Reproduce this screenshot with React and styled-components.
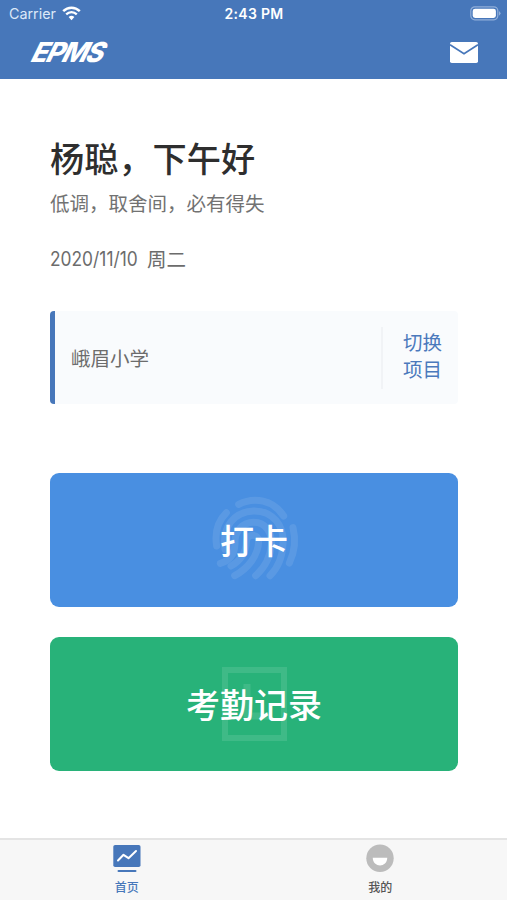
import styled, { createGlobalStyle } from "styled-components";

const GlobalStyle = createGlobalStyle`
  * {
    box-sizing: border-box;
  }
  body {
    margin: 0;
    background: #fff;
    font-family: "Noto Sans CJK SC", sans-serif;
  }
  button {
    border: 0;
    padding: 0;
    background: none;
    font: inherit;
  }
`;

const Screen = styled.div`
  display: flex;
  flex-direction: column;
  width: 507px;
  height: 900px;
  overflow: hidden;
`;

const Header = styled.header`
  height: 79px;
  flex: none;
  background: #4777ba;
  color: #fff;
`;

const StatusBar = styled.div`
  display: grid;
  grid-template-columns: 1fr auto 1fr;
  align-items: center;
  height: 27px;
  padding: 0 6px 0 7px;
  font-family: Inter, sans-serif;
  font-size: 14px;
  line-height: 27px;
`;

const Carrier = styled.div`
  display: flex;
  align-items: center;
  gap: 6px;
  padding-left: 2px;
  color: #dce8f8;
  font-size: 14.3px;
`;

const Time = styled.div`
  font-size: 14px;
  font-weight: 600;
  letter-spacing: 0.3px;
`;

const BatteryIcon = styled.svg`
  justify-self: end;
`;

const TitleBar = styled.div`
  display: flex;
  align-items: center;
  justify-content: space-between;
  height: 50px;
  padding: 0 29px 0 34px;
`;

const Logo = styled.div`
  font-family: Inter, sans-serif;
  font-size: 27.5px;
  font-weight: 800;
  line-height: 50px;
  letter-spacing: -1.5px;
  transform: skewX(-26deg) scaleX(0.97);
  transform-origin: left center;
`;

const Main = styled.main`
  flex: 1;
  padding: 53px 49px 0 50px;
`;

const Greeting = styled.h1`
  margin: 0;
  color: #2e2e2e;
  font-size: 34.2px;
  font-weight: 500;
  line-height: 50px;
`;

const Motto = styled.p`
  margin: 7px 0 0;
  color: #727272;
  font-size: 19.5px;
  line-height: 28px;
`;

const DateLine = styled.div`
  display: flex;
  margin-top: 28px;
  color: #6c6c6c;
  font-size: 19.5px;
  line-height: 28px;
`;

const DateDigits = styled.span`
  width: 97px;
  font-family: Inter, sans-serif;
  transform: scaleX(0.89);
  transform-origin: left center;
`;

const ProjectCard = styled.section`
  display: flex;
  align-items: center;
  height: 93px;
  margin-top: 38px;
  padding-left: 16px;
  border-left: 5px solid #4777ba;
  border-radius: 4px;
  background: #f9fbfd;
`;

const ProjectName = styled.div`
  flex: 1;
  color: #6c6c6c;
  font-size: 19.5px;
`;

const SwitchButton = styled.button`
  width: 77px;
  height: 62px;
  padding: 0 0 5px 20px;
  border-left: 2px solid #f1f3f6;
  color: #4b79bc;
  font-size: 19.5px;
  line-height: 27px;
  text-align: left;
`;

const ActionButton = styled.button`
  display: grid;
  place-items: center;
  width: 100%;
  height: 134px;
  margin-top: ${(props) => props.$gap}px;
  border-radius: 9px;
  background: ${(props) => props.$color};
  color: #fff;

  > * {
    grid-area: 1 / 1;
  }
`;

const ActionLabel = styled.span`
  z-index: 1;
  font-size: 34px;
  font-weight: 500;
  line-height: 50px;
`;

const TabBar = styled.nav`
  display: grid;
  grid-template-columns: 1fr 1fr;
  height: 62px;
  flex: none;
  border-top: 2px solid #e4e4e4;
  background: #f7f7f7;
`;

const Tab = styled.div`
  display: flex;
  flex-direction: column;
  align-items: center;
  padding-top: 4px;
  color: ${(props) => (props.$active ? "#4777ba" : "#555")};
  font-size: 12px;
  font-weight: 500;
  line-height: 18px;

  svg {
    margin-bottom: 5px;
  }
`;

function WifiIcon() {
  return (
    <svg width="19" height="15" viewBox="0 0 19 15" fill="none" stroke="#fff">
      <path d="M1.2 5.2 C6 .5 13 .5 17.8 5.2" strokeWidth="2.5" />
      <path d="M4.2 8.4 C7.3 5.4 11.7 5.4 14.8 8.4" strokeWidth="2.3" />
      <path d="M6.6 11 Q9.5 8.4 12.4 11 L9.5 14.2Z" fill="#fff" stroke="none" />
    </svg>
  );
}

function Battery() {
  return (
    <BatteryIcon width="31" height="15" viewBox="0 0 31 15">
      <rect x=".8" y=".8" width="27" height="13" rx="4" fill="none" stroke="#91afd9" strokeWidth="1.2" />
      <rect x="2.7" y="2.7" width="23.2" height="9.2" rx="2.4" fill="#fff" />
      <path d="M29 5 Q32 7.3 29 9.7Z" fill="#91afd9" />
    </BatteryIcon>
  );
}

function MailIcon() {
  return (
    <svg width="28" height="21" viewBox="0 0 28 21">
      <rect width="28" height="21" rx="1.8" fill="#fff" />
      <path d="M0 2.7 L14 11.8 L28 2.7" fill="none" stroke="#4777ba" strokeWidth="1.7" />
    </svg>
  );
}

function FingerprintIcon() {
  return (
    <svg width="96" height="96" viewBox="0 0 288 288" fill="none">
      <g opacity=".09" stroke="#fff" strokeWidth="21" strokeLinecap="round">
        <path d="M98 37 C145 13 202 24 233 72" />
        <path d="M61 62 C35 88 26 125 32 162" />
        <path d="M261 107 C270 143 266 180 250 213" />
        <path d="M57 172 C48 102 84 60 143 57 C201 56 235 102 231 155 C229 196 213 231 192 251" />
        <path d="M43 214 C72 206 86 187 87 155 C85 115 112 91 143 91 C178 91 199 121 196 158 C193 197 174 228 149 251" />
        <path d="M86 251 C126 229 157 191 158 147 C157 124 123 124 121 149 C121 179 104 207 75 222" />
      </g>
    </svg>
  );
}

function RecordIcon() {
  return (
    <svg width="65" height="74" viewBox="0 0 65 74" fill="none" stroke="#fff" strokeOpacity=".11">
      <rect x="3" y="3" width="59" height="68" strokeWidth="6" />
      <path d="M25 17 V49 H48" strokeWidth="7" />
    </svg>
  );
}

function HomeIcon() {
  return (
    <svg width="28" height="29" viewBox="0 0 28 29">
      <rect x=".3" y="1" width="27.2" height="22" rx="1.8" fill="#4777ba" />
      <path
        d="M5 16.5 L10.5 10.8 L15.5 14.2 L23 7"
        fill="none"
        stroke="#fff"
        strokeWidth="2"
        strokeLinecap="round"
        strokeLinejoin="round"
      />
      <path d="M5.5 27 H22.5" stroke="#4777ba" strokeWidth="2" strokeLinecap="round" />
    </svg>
  );
}

function ProfileIcon() {
  return (
    <svg width="28" height="29" viewBox="0 0 28 29">
      <circle cx="14" cy="14.3" r="13.7" fill="#bcbcbc" />
      <path d="M6.7 13.8 H21.3 C21 24 7 24 6.7 13.8Z" fill="#fff" />
    </svg>
  );
}

function App() {
  return (
    <Screen>
      <GlobalStyle />
      <Header>
        <StatusBar>
          <Carrier>
            Carrier
            <WifiIcon />
          </Carrier>
          <Time>2:43 PM</Time>
          <Battery />
        </StatusBar>
        <TitleBar>
          <Logo>EPMS</Logo>
          <MailIcon />
        </TitleBar>
      </Header>
      <Main>
        <Greeting>杨聪，下午好</Greeting>
        <Motto>低调，取舍间，必有得失</Motto>
        <DateLine>
          <DateDigits>2020/11/10</DateDigits>
          <span>周二</span>
        </DateLine>
        <ProjectCard>
          <ProjectName>峨眉小学</ProjectName>
          <SwitchButton>
            切换
            <br />
            项目
          </SwitchButton>
        </ProjectCard>
        <ActionButton $color="#498fe1" $gap={69}>
          <FingerprintIcon />
          <ActionLabel>打卡</ActionLabel>
        </ActionButton>
        <ActionButton $color="#28b279" $gap={30}>
          <RecordIcon />
          <ActionLabel>考勤记录</ActionLabel>
        </ActionButton>
      </Main>
      <TabBar>
        <Tab $active>
          <HomeIcon />
          首页
        </Tab>
        <Tab>
          <ProfileIcon />
          我的
        </Tab>
      </TabBar>
    </Screen>
  );
}

export default App;
